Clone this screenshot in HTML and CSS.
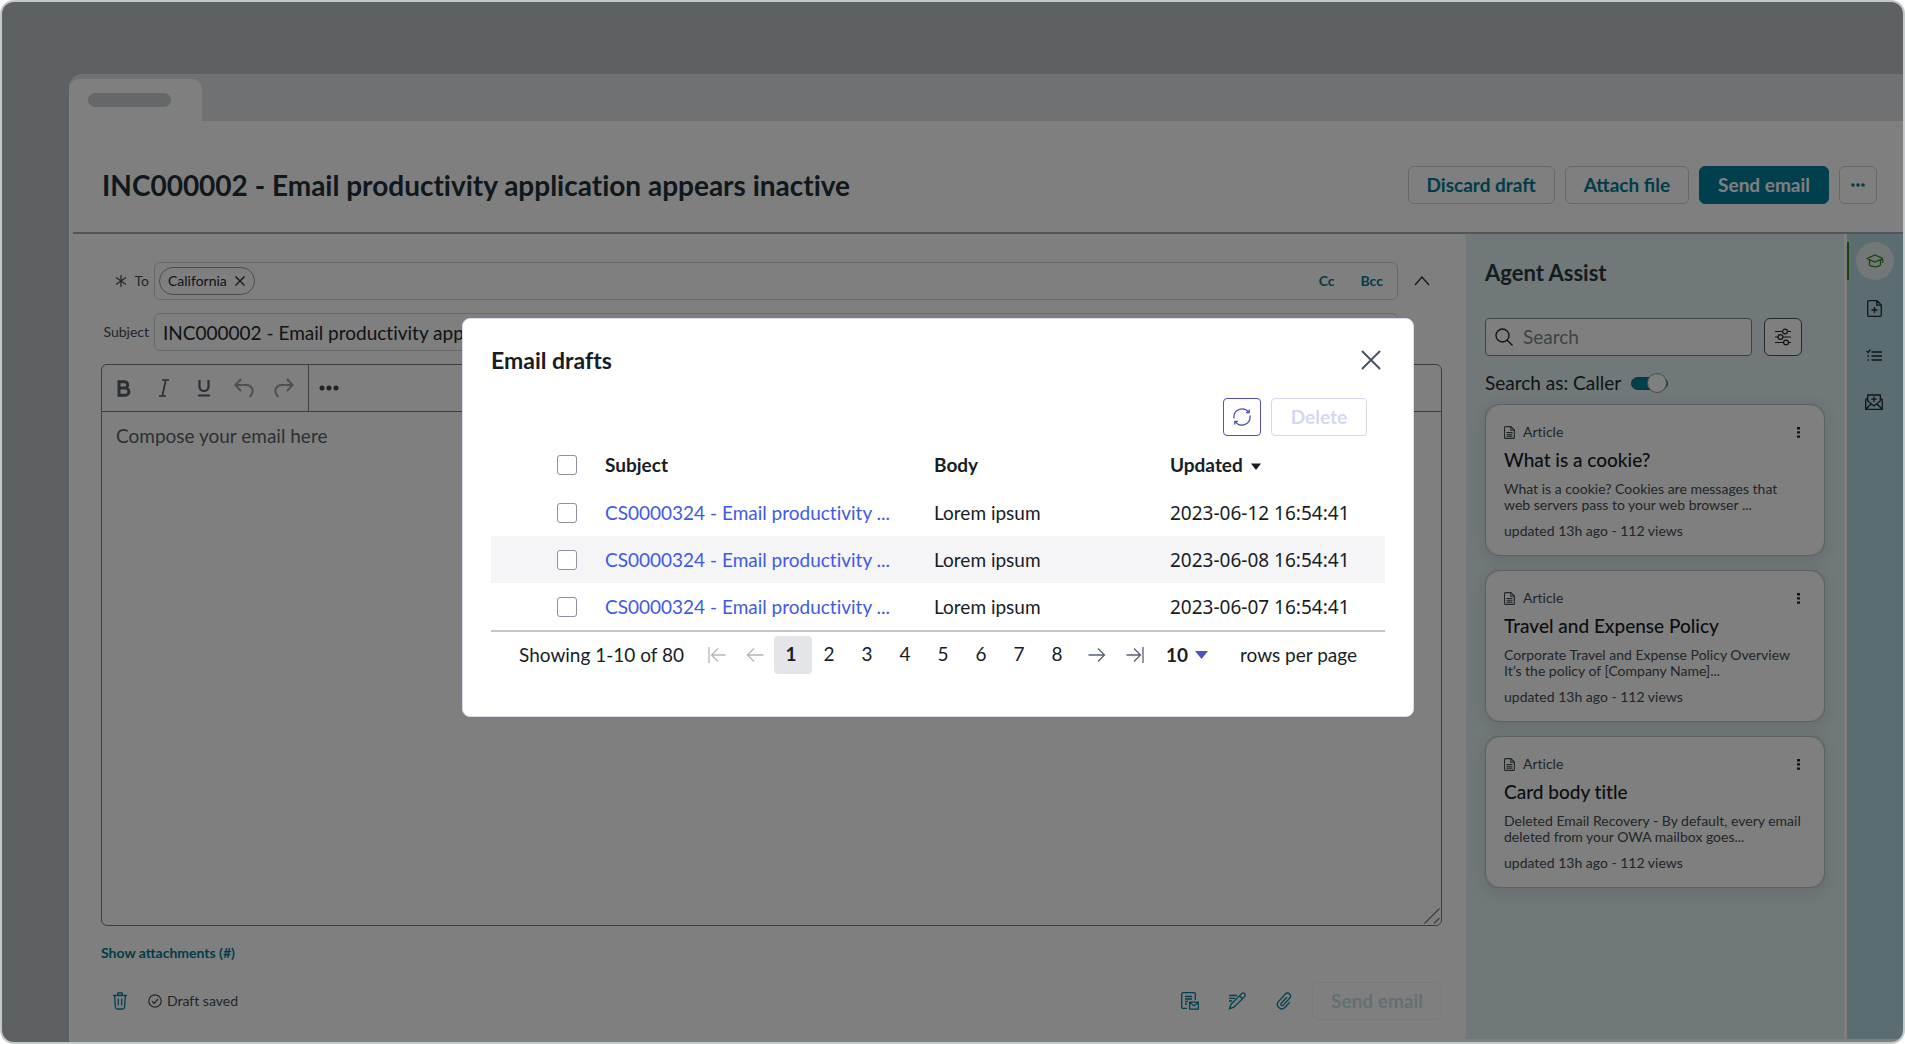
FILE: index.html
```html
<!DOCTYPE html>
<html lang="en">
<head>
    <meta charset="UTF-8">
    <meta name="viewport" content="width=device-width, initial-scale=1.0">
    <title>INC000002 - Email drafts</title>
    <link rel="stylesheet" href="styles.css">
</head>
<body>
<div class="frame">
    <div class="workspace">
        <div class="tabs">
            <div class="tab"><span class="tab-pill"></span></div>
        </div>

        <header class="page-header">
            <h1>INC000002 - Email productivity application appears inactive</h1>
            <div class="header-actions">
                <button class="btn">Discard draft</button>
                <button class="btn">Attach file</button>
                <button class="btn btn-primary">Send email</button>
                <button class="btn btn-icon" aria-label="More actions">
                    <svg width="14" height="4" viewBox="0 0 14 4" fill="currentColor"><circle cx="2" cy="2" r="1.800"/><circle cx="7" cy="2" r="1.800"/><circle cx="12" cy="2" r="1.800"/></svg>
                </button>
            </div>
        </header>

        <div class="content">
            <!-- Email composer -->
            <main class="composer">
                <div class="field-row">
                    <label class="field-label" for="to">
                        <svg width="12" height="12" viewBox="0 0 12 12" stroke="currentColor" stroke-width="1.2"><path d="M6 0v12M1 2.5l10 7M11 2.5l-10 7"/></svg>
                        To
                    </label>
                    <div class="field field-to">
                        <span class="chip">California
                            <button class="chip-remove" aria-label="Remove California">
                                <svg width="10" height="10" viewBox="0 0 10 10" stroke="currentColor" stroke-width="1.3"><path d="M.5.5l9 9M9.5.5l-9 9"/></svg>
                            </button>
                        </span>
                        <input id="to" type="text">
                        <a class="copy-link" href="#">Cc</a>
                        <a class="copy-link" href="#">Bcc</a>
                    </div>
                    <button class="collapse" aria-label="Collapse">
                        <svg width="16" height="10" viewBox="0 0 16 10" fill="none" stroke="currentColor" stroke-width="1.2"><path d="M1 9l7-8 7 8"/></svg>
                    </button>
                </div>
                <div class="field-row">
                    <label class="field-label" for="subject">Subject</label>
                    <input class="field field-subject" id="subject" type="text" value="INC000002 - Email productivity application appears inactive">
                    <span class="collapse"></span>
                </div>

                <div class="editor">
                    <div class="toolbar">
                        <button aria-label="Bold"><svg width="14" height="17" viewBox="0 0 14 17" fill="none" stroke="currentColor" stroke-width="3"><path d="M2 1.700h5.500a3.200 3.200 0 0 1 0 6.400H2zM2 8.100h6.300a3.600 3.600 0 0 1 0 7.200H2z"/></svg></button>
                        <button aria-label="Italic"><svg width="12" height="18" viewBox="0 0 12 18" fill="none" stroke="currentColor" stroke-width="1.700"><path d="M4 1h7M1 17h7M7.800 1l-3.500 16"/></svg></button>
                        <button aria-label="Underline"><svg width="14" height="18" viewBox="0 0 14 18" fill="none" stroke="currentColor" stroke-width="2.200"><path d="M2.500 1v6.500a4.500 4.500 0 0 0 9 0V1M1 16.500h12"/></svg></button>
                        <button class="dim" aria-label="Undo"><svg width="20" height="20" viewBox="0 0 20 20" fill="none" stroke="currentColor" stroke-width="2"><path d="M7 1L1.500 7 7 13M1.500 7h11a6 6 0 0 1 5 9.500L16 19"/></svg></button>
                        <button class="dim" aria-label="Redo"><svg width="20" height="20" viewBox="0 0 20 20" fill="none" stroke="currentColor" stroke-width="2"><path d="M13 1l5.500 6L13 13M18.500 7h-11a6 6 0 0 0-5 9.500L4 19"/></svg></button>
                        <span class="divider"></span>
                        <button class="more" aria-label="More formatting"><svg width="20" height="6" viewBox="0 0 20 6" fill="currentColor"><circle cx="3" cy="3" r="2.500"/><circle cx="10" cy="3" r="2.500"/><circle cx="17" cy="3" r="2.500"/></svg></button>
                    </div>
                    <textarea aria-label="Email body" placeholder="Compose your email here"></textarea>
                    <svg class="grip" width="16" height="16" viewBox="0 0 16 16" stroke="currentColor" stroke-width="1.2"><path d="M.5 15.500l15-15M10 15.500l5.500-5.500"/></svg>
                </div>

                <a class="attachments" href="#">Show attachments (#)</a>

                <div class="composer-footer">
                    <button class="tool" aria-label="Delete draft">
                        <svg width="14" height="18" viewBox="0 0 14 18" fill="none" stroke="currentColor" stroke-width="1.3"><path d="M0 3.500h14M4.500 3.500L5 1h4l.500 2.500M1.500 3.500l1 12a1.800 1.800 0 0 0 1.700 1.500h5.600a1.800 1.800 0 0 0 1.700-1.500l1-12M5.300 6.500v7M8.700 6.500v7"/></svg>
                    </button>
                    <span class="saved">
                        <svg width="14" height="14" viewBox="0 0 14 14" fill="none" stroke="currentColor" stroke-width="1.200"><circle cx="7" cy="7" r="6.200"/><path d="M4 7.300l2.200 2L10 5"/></svg>
                        Draft saved
                    </span>
                    <button class="tool" aria-label="Email templates">
                        <svg width="18" height="18" viewBox="0 0 18 18" fill="none" stroke="currentColor" stroke-width="1.300"><path d="M6 16.300H2A1.300 1.300 0 0 1 .7 15V2A1.300 1.300 0 0 1 2 .7h11A1.300 1.300 0 0 1 14.300 2v6M4 4.500h7M4 7h7M4 9.500h3M4 12h2M8.600 10.200h8.700v6.900H8.600zM9 10.700l4 3 4-3"/></svg>
                    </button>
                    <button class="tool" aria-label="Quick text">
                        <svg width="18" height="18" viewBox="0 0 18 18" fill="none" stroke="currentColor" stroke-width="1.300"><path d="M3 12.200L13.600 1.600a2.100 2.100 0 0 1 3 3L6 15.200l-4.500 1.600zM11.500 3.700l3 3M1 3.500h8M1 6.300h6M1 9h3"/></svg>
                    </button>
                    <button class="tool" aria-label="Attach file">
                        <svg width="16" height="18" viewBox="0 0 16 18" fill="none" stroke="currentColor" stroke-width="1.300"><path d="M10.800 5.200l-5.500 6a1.400 1.400 0 0 0 2.100 1.900l6.200-6.800a3 3 0 0 0-4.400-4.200L2.400 9.600a4.400 4.400 0 0 0 6.300 6.100l5-5.500"/></svg>
                    </button>
                    <button class="btn btn-muted" disabled>Send email</button>
                </div>
            </main>

            <!-- Agent Assist panel -->
            <aside class="assist">
                <h2>Agent Assist</h2>
                <div class="search-row">
                    <label class="search">
                        <svg width="18" height="18" viewBox="0 0 18 18" fill="none" stroke="currentColor" stroke-width="1.400"><circle cx="7.500" cy="7.500" r="6.500"/><path d="M12 12l5.500 5.500"/></svg>
                        <input type="search" placeholder="Search" aria-label="Search">
                    </label>
                    <button class="filter" aria-label="Filters">
                        <svg width="16" height="18" viewBox="0 0 16 18" fill="none" stroke="currentColor" stroke-width="1.200"><path d="M0 3.500h7.500M12.500 3.500H16M0 9h3M8 9h8M0 14.500h8.500M13.500 14.500H16"/><circle cx="10" cy="3.500" r="2.400"/><circle cx="5.500" cy="9" r="2.400"/><circle cx="11" cy="14.500" r="2.400"/></svg>
                    </button>
                </div>
                <label class="search-as">Search as: Caller
                    <input class="switch" type="checkbox" role="switch" checked>
                </label>

                <article class="card">
                    <div class="card-inner">
                        <div class="card-type">
                            <svg width="11" height="13" viewBox="0 0 11 13" fill="none" stroke="currentColor" stroke-width="1.100"><path d="M1.500.600h5.500l3.400 3.400v7.400a1 1 0 0 1-1 1H1.500a1 1 0 0 1-1-1V1.600a1 1 0 0 1 1-1zM6.800.600V4.200h3.600M2.500 6.500h6M2.500 8.300h6M2.500 10.100h6"/></svg>
                            <span>Article</span>
                            <button aria-label="Card options"><svg width="3" height="11" viewBox="0 0 3 11" fill="currentColor"><path d="M0 0h3v2.400H0zM0 4.200h3v2.400H0zM0 8.400h3v2.400H0z"/></svg></button>
                        </div>
                        <h3>What is a cookie?</h3>
                        <p>What is a cookie? Cookies are messages that<br>web servers pass to your web browser ...</p>
                        <p class="card-meta">updated 13h ago - 112 views</p>
                    </div>
                </article>
                <article class="card">
                    <div class="card-inner">
                        <div class="card-type">
                            <svg width="11" height="13" viewBox="0 0 11 13" fill="none" stroke="currentColor" stroke-width="1.100"><path d="M1.500.600h5.500l3.400 3.400v7.400a1 1 0 0 1-1 1H1.500a1 1 0 0 1-1-1V1.600a1 1 0 0 1 1-1zM6.800.600V4.200h3.600M2.500 6.500h6M2.500 8.300h6M2.500 10.100h6"/></svg>
                            <span>Article</span>
                            <button aria-label="Card options"><svg width="3" height="11" viewBox="0 0 3 11" fill="currentColor"><path d="M0 0h3v2.400H0zM0 4.200h3v2.400H0zM0 8.400h3v2.400H0z"/></svg></button>
                        </div>
                        <h3>Travel and Expense Policy</h3>
                        <p>Corporate Travel and Expense Policy Overview<br>It’s the policy of [Company Name]...</p>
                        <p class="card-meta">updated 13h ago - 112 views</p>
                    </div>
                </article>
                <article class="card">
                    <div class="card-inner">
                        <div class="card-type">
                            <svg width="11" height="13" viewBox="0 0 11 13" fill="none" stroke="currentColor" stroke-width="1.100"><path d="M1.500.600h5.500l3.400 3.400v7.400a1 1 0 0 1-1 1H1.500a1 1 0 0 1-1-1V1.600a1 1 0 0 1 1-1zM6.800.600V4.200h3.600M2.500 6.500h6M2.500 8.300h6M2.500 10.100h6"/></svg>
                            <span>Article</span>
                            <button aria-label="Card options"><svg width="3" height="11" viewBox="0 0 3 11" fill="currentColor"><path d="M0 0h3v2.400H0zM0 4.200h3v2.400H0zM0 8.400h3v2.400H0z"/></svg></button>
                        </div>
                        <h3>Card body title</h3>
                        <p>Deleted Email Recovery - By default, every email<br>deleted from your OWA mailbox goes...</p>
                        <p class="card-meta">updated 13h ago - 112 views</p>
                    </div>
                </article>
            </aside>

            <nav class="rail">
                <button class="active" aria-label="Agent Assist">
                    <svg width="18" height="14" viewBox="0 0 18 14" fill="none" stroke="currentColor" stroke-width="1.300"><path d="M9 1l8 3.500L9 8 1 4.500zM3.500 6v5c3 2.500 8 2.500 11 0V6M16.800 4.500V9"/></svg>
                </button>
                <button aria-label="New record">
                    <svg width="15" height="17" viewBox="0 0 15 17" fill="none" stroke="currentColor" stroke-width="1.300"><path d="M2 .7h8L14.300 5v10a1.300 1.300 0 0 1-1.300 1.300H2A1.300 1.300 0 0 1 .7 15V2A1.300 1.300 0 0 1 2 .7zM9.800.7V5.200h4.500M7.500 7v6M4.500 10h6"/></svg>
                </button>
                <button aria-label="Checklist">
                    <svg width="16" height="12" viewBox="0 0 16 12" fill="none" stroke="currentColor" stroke-width="1.300"><path d="M5.500 3H16M5.500 7H16M5.500 11H16M.5 2l1.500 1.500L4.500.5M1.500 7h1.500M1.500 11h1.500"/></svg>
                </button>
                <button aria-label="New email">
                    <svg width="18" height="16" viewBox="0 0 18 16" fill="none" stroke="currentColor" stroke-width="1.300"><path d="M2.700 5V1h12.600v4M.7 5.500L2.700 4v3l6.300 5 6.300-5V4l2 1.500v9.800H.7zM.7 15.300l5.600-5.500M17.300 15.300l-5.600-5.500M9 2.500v5.500M6.300 5.200h5.400"/></svg>
                </button>
            </nav>
        </div>
    </div>

    <!-- Email drafts modal -->
    <div class="backdrop">
        <div class="modal" role="dialog" aria-modal="true" aria-labelledby="drafts-title">
            <div class="modal-header">
                <h2 id="drafts-title">Email drafts</h2>
                <button class="close" aria-label="Close">
                    <svg width="20" height="20" viewBox="0 0 20 20" stroke="currentColor" stroke-width="2" stroke-linecap="round"><path d="M1.500 1.500l17 17M18.500 1.500l-17 17"/></svg>
                </button>
            </div>
            <div class="modal-actions">
                <button class="refresh" aria-label="Refresh">
                    <svg width="18" height="18" viewBox="0 0 18 18" fill="none" stroke="currentColor" stroke-width="1.300"><path d="M.9 10.500V9A8.100 8.100 0 0 1 15.500 4.200M17.100 7.500V9A8.100 8.100 0 0 1 2.500 13.800M13 4.700h3.200V1.500M5 13.300H1.800v3.200"/></svg>
                </button>
                <button class="delete" disabled>Delete</button>
            </div>

            <table class="drafts">
                <thead>
                    <tr>
                        <th class="col-check"><input type="checkbox" aria-label="Select all"></th>
                        <th class="col-subject">Subject</th>
                        <th class="col-body">Body</th>
                        <th>Updated <svg class="sort" width="10" height="7" viewBox="0 0 10 7" fill="currentColor"><path d="M0 .5h10L5 7z"/></svg></th>
                    </tr>
                </thead>
                <tbody>
                    <tr>
                        <td><input type="checkbox" aria-label="Select draft 1"></td>
                        <td><a href="#">CS0000324 - Email productivity ...</a></td>
                        <td>Lorem ipsum</td>
                        <td class="date">2023-06-12 16:54:41</td>
                    </tr>
                    <tr>
                        <td><input type="checkbox" aria-label="Select draft 2"></td>
                        <td><a href="#">CS0000324 - Email productivity ...</a></td>
                        <td>Lorem ipsum</td>
                        <td class="date">2023-06-08 16:54:41</td>
                    </tr>
                    <tr>
                        <td><input type="checkbox" aria-label="Select draft 3"></td>
                        <td><a href="#">CS0000324 - Email productivity ...</a></td>
                        <td>Lorem ipsum</td>
                        <td class="date">2023-06-07 16:54:41</td>
                    </tr>
                </tbody>
            </table>

            <div class="pagination">
                <span class="showing">Showing 1-10 of 80</span>
                <button disabled aria-label="First page"><svg width="18" height="16" viewBox="0 0 18 16" fill="none" stroke="currentColor" stroke-width="1.300"><path d="M1 0v16M17.500 8H4M10 1.500L3.500 8l6.500 6.500"/></svg></button>
                <button disabled aria-label="Previous page"><svg width="18" height="16" viewBox="0 0 18 16" fill="none" stroke="currentColor" stroke-width="1.300"><path d="M17.500 8H2M8 1.500L1.500 8 8 14.500"/></svg></button>
                <button class="page current">1</button>
                <button class="page">2</button>
                <button class="page">3</button>
                <button class="page">4</button>
                <button class="page">5</button>
                <button class="page">6</button>
                <button class="page">7</button>
                <button class="page">8</button>
                <button class="arrow" aria-label="Next page"><svg width="18" height="16" viewBox="0 0 18 16" fill="none" stroke="currentColor" stroke-width="1.300"><path d="M.5 8H16M10 1.500L16.500 8 10 14.500"/></svg></button>
                <button class="arrow" aria-label="Last page"><svg width="18" height="16" viewBox="0 0 18 16" fill="none" stroke="currentColor" stroke-width="1.300"><path d="M17 0v16M.5 8H14M8 1.500L14.500 8 8 14.500"/></svg></button>
                <span class="page-size">
                    <select id="rows"><option>10</option><option>20</option><option>50</option></select>
                    <svg width="13" height="8" viewBox="0 0 13 8" fill="currentColor"><path d="M0 0h13L6.500 8z"/></svg>
                </span>
                <label for="rows">rows per page</label>
            </div>
        </div>
    </div>
</div>
</body>
</html>
```
FILE: styles.css
```css
* {
    box-sizing: border-box;
}

body {
    margin: 0;
    background-color: #fff;
    color: #22262e;
    font-family: Lato, "Open Sans", sans-serif;
    font-size: 19px;
    font-variant-ligatures: none;
    line-height: 24px;
}

h1, h2, h3, p {
    margin: 0;
}

button, input, select, textarea {
    margin: 0;
    padding: 0;
    border: none;
    background: none;
    color: inherit;
    font: inherit;
}

input, textarea {
    font-variant-ligatures: none;
}

button {
    display: inline-flex;
    align-items: center;
    justify-content: center;
    cursor: pointer;
}

a {
    text-decoration: none;
}

svg {
    display: block;
    flex: none;
}

/* Window frame */
.frame {
    position: relative;
    display: flex;
    min-height: 100vh;
    padding: 72px 0 0 67px;
    border: 2px solid #c4c9c9;
    border-radius: 14px;
    background-color: #bac2c7;
    overflow: hidden;
}

.workspace {
    display: flex;
    flex: 1;
    flex-direction: column;
    border-top-left-radius: 14px;
    background-color: #fff;
    overflow: hidden;
}

.tabs {
    height: 47px;
    padding-top: 5px;
    background-color: #e0e2e6;
}

.tab {
    display: flex;
    width: 133px;
    height: 42px;
    padding: 14px 31px 14px 19px;
    border-radius: 10px 10px 0 0;
    background-color: #fff;
}

.tab-pill {
    flex: 1;
    border-radius: 7px;
    background-color: #c8d0d0;
}

/* Page header */
.page-header {
    display: flex;
    align-items: center;
    justify-content: space-between;
    height: 113px;
    margin-left: 4px;
    padding: 28px 26px 12px 29px;
    border-bottom: 2px solid #a5abaf;
}

h1 {
    color: #21303a;
    font-size: 28px;
    font-weight: 700;
    line-height: 36px;
}

.header-actions {
    display: flex;
    gap: 10px;
}

.btn {
    height: 38px;
    padding: 0 18px;
    border: 1px solid #cbd3d3;
    border-radius: 6px;
    color: #007a93;
    font-variant-ligatures: normal;
    font-weight: 700;
}

.btn-primary {
    border-color: #007f9b;
    background-color: #007f9b;
    color: #fff;
}

.btn-icon {
    width: 38px;
    padding: 0;
}

.btn-muted {
    border-color: #f0f2f2;
    color: #c5dfe6;
}

.content {
    display: flex;
    flex: 1;
}

/* Composer */
.composer {
    display: flex;
    flex: 1;
    flex-direction: column;
    padding: 28px 24px 22px 32px;
}

.field-row {
    display: flex;
    margin-bottom: 13px;
}

.field-label {
    display: flex;
    align-items: center;
    justify-content: flex-end;
    gap: 8px;
    width: 53px;
    padding-right: 5px;
    color: #444c52;
    font-size: 14px;
}

.field {
    flex: 1;
    height: 38px;
    border: 1px solid #cbd3d3;
    border-radius: 6px;
}

.field-to {
    display: flex;
    align-items: center;
    gap: 26px;
    padding: 0 14px 0 4px;
}

.field-to input {
    flex: 1;
}

.field-subject {
    padding: 0 8px;
}

.chip {
    display: flex;
    align-items: center;
    gap: 8px;
    height: 28px;
    padding: 0 9px 0 8px;
    border: 1px solid #929b9d;
    border-radius: 14px;
    font-size: 14px;
}

.copy-link {
    color: #007a93;
    font-size: 14px;
    font-weight: 700;
}

.collapse {
    width: 44px;
    padding-left: 4px;
}

.editor {
    position: relative;
    display: flex;
    flex: 1;
    flex-direction: column;
    border: 1px solid #727c82;
    border-radius: 6px;
}

.toolbar {
    display: flex;
    align-items: center;
    height: 47px;
    padding-left: 2px;
    border-bottom: 1px solid #727c82;
    color: #56606a;
}

.toolbar button {
    width: 40px;
    height: 40px;
}

.toolbar .dim {
    color: #9a9ea6;
}

.toolbar .divider {
    align-self: stretch;
    width: 5px;
    border-right: 1px solid #727c82;
}

.toolbar .more {
    color: #3c444c;
}

.editor textarea {
    flex: 1;
    padding: 12px 14px;
    resize: none;
}

.editor textarea::placeholder {
    color: #56626a;
    opacity: 1;
}

.grip {
    position: absolute;
    right: 1px;
    bottom: 1px;
    color: #727c82;
}

.attachments {
    align-self: flex-start;
    margin: 15px 0 17px;
    color: #007a93;
    font-size: 14px;
    font-variant-ligatures: normal;
    font-weight: 700;
}

.composer-footer {
    display: flex;
    align-items: center;
}

.tool {
    width: 38px;
    height: 38px;
    margin-right: 9px;
    color: #00859f;
}

.saved {
    display: flex;
    flex: 1;
    align-items: center;
    gap: 5px;
    color: #444c52;
    font-size: 14px;
}

/* Agent Assist */
.assist {
    width: 378px;
    margin-bottom: 3px;
    padding: 26px 19px 0;
    background-color: #e1f0f3;
}

.assist h2 {
    height: 58px;
    color: #2b3840;
    font-size: 22px;
    line-height: 26px;
}

.search-row {
    display: flex;
    gap: 12px;
}

.search {
    display: flex;
    align-items: center;
    gap: 10px;
    width: 267px;
    height: 38px;
    padding: 0 9px;
    border: 1px solid #7d888c;
    border-radius: 4px;
    background-color: #fff;
}

.search input {
    width: 100%;
}

.search input::placeholder {
    color: #7c848a;
    opacity: 1;
}

.filter {
    width: 38px;
    height: 38px;
    border: 1px solid #4a5358;
    border-radius: 6px;
    background-color: #fff;
}

.search-as {
    display: flex;
    align-items: center;
    gap: 10px;
    height: 48px;
    padding-top: 6px;
}

.switch {
    display: flex;
    align-items: center;
    justify-content: flex-end;
    width: 37px;
    height: 13px;
    border: 1px solid #2f5d6a;
    border-radius: 7px;
    background-color: #007f9b;
    appearance: none;
}

.switch::before {
    content: "";
    flex: none;
    width: 18px;
    height: 18px;
    border: 1px solid #929b9d;
    border-radius: 50%;
    background-color: #fff;
}

.card {
    margin-bottom: 14px;
    border: 1px solid #b9c4c8;
    border-radius: 13px;
    background-color: #d9e8ec;
    box-shadow: 0 4px 16px rgba(60, 80, 90, 0.14);
}

.card-inner {
    padding: 15px 18px 16px;
    border-radius: 16px;
    background-color: #fff;
    color: #434c52;
    font-size: 14px;
    line-height: 16px;
}

.card-type {
    display: flex;
    align-items: center;
    gap: 8px;
    height: 24px;
}

.card-type span {
    flex: 1;
}

.card-type button {
    width: 16px;
    color: #22262e;
}

.card h3 {
    padding: 4px 0 9px;
    color: #161b1f;
    font-size: 19px;
    font-weight: 500;
    line-height: 24px;
}

.card-meta {
    padding: 10px 0 0;
}

.rail {
    display: flex;
    flex-direction: column;
    gap: 9px;
    width: 56px;
    margin: 0 0 3px 3px;
    padding: 8px 2px 0 0;
    background-color: #b6dae2;
    color: #1e2b31;
}

.rail button {
    height: 38px;
}

.rail .active {
    border-left: 2px solid #2c8a0c;
    color: #2c8a0c;
}

.rail .active svg {
    box-sizing: content-box;
    padding: 12px 10px;
    border-radius: 50%;
    background-color: #e6eef0;
}

/* Drafts modal */
.backdrop {
    position: absolute;
    inset: 0;
    padding: 316px 29px 0 0;
    background-color: rgba(0, 0, 0, 0.5);
}

.modal {
    width: 952px;
    margin: 0 auto;
    padding: 28px 28px 38px;
    border: 1px solid #dadde7;
    border-radius: 8px;
    background-color: #fff;
    color: #181d25;
}

.modal-header {
    display: flex;
    align-items: center;
    justify-content: space-between;
    height: 26px;
}

.modal-header h2 {
    font-size: 23px;
    line-height: 26px;
}

.close {
    width: 28px;
    height: 28px;
    color: #4a5462;
}

.modal-actions {
    display: flex;
    justify-content: flex-end;
    gap: 10px;
    padding: 25px 18px 5px 0;
}

.refresh, .delete {
    width: 38px;
    height: 38px;
    border: 1px solid #4f52bd;
    border-radius: 4px;
    color: #4f52bd;
}

.delete {
    width: 96px;
    border-color: #d5d7f0;
    color: #d5d7f0;
    font-weight: 700;
}

.drafts {
    width: 100%;
    border-bottom: 2px solid #c4c6cf;
    border-spacing: 0;
    table-layout: fixed;
}

.drafts th, .drafts td {
    padding: 0;
    text-align: left;
}

.drafts th {
    height: 48px;
}

.drafts td {
    height: 47px;
}

.drafts .col-check {
    width: 114px;
}

.drafts .col-subject {
    width: 329px;
}

.drafts .col-body {
    width: 236px;
}

.drafts tbody tr:nth-child(even) {
    background-color: #f5f5f8;
}

.drafts a {
    color: #4159e8;
}

.drafts .date {
    font-family: "Noto Sans", sans-serif;
    font-size: 19px;
}

.drafts input {
    display: block;
    width: 20px;
    height: 20px;
    margin-left: 66px;
    border: 1px solid #8c92a0;
    border-radius: 3px;
    background-color: #fff;
    appearance: none;
}

.sort {
    display: inline-block;
    margin-left: 4px;
    vertical-align: 2px;
}

.pagination {
    display: flex;
    align-items: center;
    padding: 4px 28px;
}

.pagination .showing {
    flex: 1;
}

.pagination button {
    width: 38px;
    height: 38px;
    border-radius: 4px;
}

.pagination .page {
    padding: 0 4px 2px 0;
}

.pagination .current {
    background-color: #e4e5e9;
    font-weight: 700;
}

.pagination button:disabled {
    color: #b5b7bd;
}

.pagination .arrow {
    color: #5a6270;
}

.page-size {
    display: flex;
    align-items: center;
    gap: 6px;
    margin: 0 32px 0 12px;
    color: #4f52bd;
}

.page-size select {
    width: 23px;
    color: #181d25;
    font-weight: 700;
    appearance: none;
}
```
